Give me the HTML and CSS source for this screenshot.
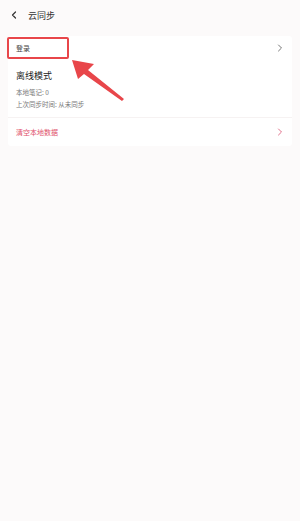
FILE: index.html
```html
<!DOCTYPE html>
<html lang="zh-CN">
<head>
    <meta charset="UTF-8">
    <meta name="viewport" content="width=device-width, initial-scale=1.0">
    <title>云同步</title>
    <link rel="stylesheet" href="styles.css">
</head>
<body>
    <div class="top-bar">
        <svg class="back-icon" width="8" height="8" viewBox="0 0 8 8">
            <path d="M5.5 1 L2.5 4 L5.5 7" fill="none" stroke="#333" stroke-width="1.2" stroke-linecap="round" stroke-linejoin="round"/>
        </svg>
        <span class="top-title">云同步</span>
    </div>

    <div class="card">
        <div class="row login-row">
            <span class="login-text">登录</span>
            <svg class="chevron" width="6" height="8" viewBox="0 0 6 8">
                <path d="M1.5 1 L4.5 4 L1.5 7" fill="none" stroke="#777" stroke-width="1" stroke-linecap="round" stroke-linejoin="round"/>
            </svg>
        </div>
        <div class="offline">
            <div class="offline-title">离线模式</div>
            <div class="offline-info">本地笔记: 0</div>
            <div class="offline-info">上次同步时间: 从未同步</div>
        </div>
        <div class="row clear-row">
            <span class="clear-text">清空本地数据</span>
            <svg class="chevron" width="6" height="8" viewBox="0 0 6 8">
                <path d="M1.5 1 L4.5 4 L1.5 7" fill="none" stroke="#e0708a" stroke-width="1" stroke-linecap="round" stroke-linejoin="round"/>
            </svg>
        </div>
    </div>

    <!-- annotation -->
    <div class="mark-box"></div>
    <svg class="mark-arrow" width="300" height="140" viewBox="0 0 300 140">
        <polygon points="72,60 94,64 88,70 124,99 122,101 84,74 78,79" fill="#e8464a"/>
    </svg>
</body>
</html>
```

FILE: styles.css
```css
body{
    margin: 0;
    background-color: #fcfafa;
    font-family: "Noto Sans CJK SC", "Noto Sans", sans-serif;
    width: 300px;
    height: 521px;
    position: relative;
}

.top-bar{
    height: 30px;
    display: flex;
    align-items: center;
    padding-left: 10px;
}
.back-icon{
    margin-right: 10px;
}
.top-title{
    font-size: 9px;
    color: #333;
}

.card{
    margin: 6px 8px 0 8px;
    background-color: white;
    border-radius: 3px;
}

.row{
    display: flex;
    align-items: center;
    justify-content: space-between;
    padding: 0 9px 0 8px;
}
.login-row{
    height: 23px;
}
.login-text{
    font-size: 7px;
    color: #444;
}

.offline{
    padding: 10px 8px 7px 8px;
}
.offline-title{
    font-size: 9px;
    color: #222;
    margin-bottom: 4px;
}
.offline-info{
    font-size: 6.5px;
    color: #777;
    line-height: 12px;
}

.clear-row{
    height: 28px;
    border-top: 1px solid #f6f2f2;
}
.clear-text{
    font-size: 7px;
    color: #e0506a;
}

.mark-box{
    position: absolute;
    left: 7px;
    top: 37px;
    width: 58px;
    height: 18px;
    border: 2px solid #e8464a;
    border-radius: 2px;
}
.mark-arrow{
    position: absolute;
    left: 0;
    top: 0;
}
```
